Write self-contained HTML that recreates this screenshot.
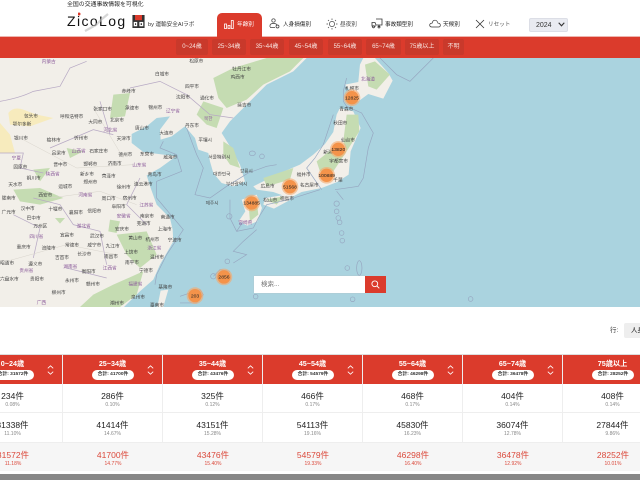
<!DOCTYPE html>
<html lang="ja"><head><meta charset="utf-8"><title>ZicoLog</title>
<style>
*{box-sizing:border-box;margin:0;padding:0}
html,body{width:640px;height:480px;overflow:hidden;background:#fff;font-family:"Liberation Sans","Noto Sans CJK JP",sans-serif}
.a{position:absolute;white-space:nowrap}
.nav{font-size:5.6px;line-height:8px;color:#222;top:21px}
.tag{position:absolute;top:39px;height:16px;background:#c9392b;color:#f8e2de;border-radius:2px;font-size:6px;line-height:16px;text-align:center}
.col{position:absolute;top:355px;width:100px;height:116px;text-align:center}
.h{height:29px;background:#db3b2c;border-right:1px solid #eee;color:#fff;position:relative}
.h b{position:absolute;left:0;right:0;top:4px;font-size:7.2px;line-height:9px}
.h i{position:absolute;left:29px;top:15px;width:42px;height:10px;border-radius:5px;background:#fff;color:#333;font-style:normal;font-size:4.8px;line-height:10px;font-weight:bold}
.h svg{position:absolute;left:84px;top:10px}
.r{height:29px;border-right:1px solid #eee;border-bottom:1px solid #eee;padding-top:7px;font-size:8.5px;line-height:11px;color:#222}
.r small{display:block;font-size:5px;line-height:6px;color:#888}
.r.t{background:#f6f6f6;color:#db4a3c;border:0;height:29px}
.r.t small{color:#db4a3c}
.r.m{height:30px}
</style></head><body>
<div class="a" style="left:67px;top:1px;font-size:5.9px;line-height:8px;color:#222">全国の交通事故情報を可視化</div>
<div class="a" style="left:67px;top:12px;font-size:14px;line-height:18px;letter-spacing:1.4px;color:#111;font-family:'Liberation Sans',sans-serif">ZicoLog</div>
<svg class="a" style="left:78px;top:9px" width="35" height="26" viewBox="0 0 35 26"><circle cx="1" cy="5" r="1.5" fill="#db3b2c"/><path d="M7 22L18 16L24 10L30 5" stroke="#bbb" stroke-width="2.2" fill="none" opacity=".6"/></svg>
<svg class="a" style="left:132px;top:15px" width="13" height="13" viewBox="0 0 14 15"><rect width="14" height="15" fill="#333"/><rect y="0" x="3" width="8" height="6" fill="#db3b2c"/><rect x="1.5" y="8" width="4" height="5" fill="#fff"/><rect x="8" y="8" width="4.5" height="5" fill="#fff"/><rect x="3" y="9.5" width="1.2" height="2" fill="#333"/><rect x="9.5" y="9.5" width="1.5" height="2" fill="#333"/></svg>
<div class="a" style="left:148px;top:21px;font-size:5.6px;line-height:8px;color:#333">by 運輸安全AIラボ</div>

<div class="a" style="left:217px;top:13px;width:45px;height:25px;background:#db3b2c;border-radius:5px 5px 0 0"></div>
<svg class="a" style="left:224px;top:20px" width="10" height="9" viewBox="0 0 10 9" fill="none" stroke="#fff" stroke-width=".8"><rect x=".5" y="4" width="2" height="4.5"/><rect x="4" y="5.5" width="2" height="3"/><rect x="7.3" y=".5" width="2" height="8"/></svg>
<div class="a nav" style="left:237px;color:#fff">年齢別</div>
<svg class="a" style="left:269px;top:18px" width="11" height="11" viewBox="0 0 11 11" fill="none" stroke="#333" stroke-width=".7"><circle cx="4.5" cy="2.5" r="1.7"/><path d="M1 9V7.5Q1 5.5 4.5 5.5T8 7.5"/><circle cx="8.5" cy="8.5" r="1.5"/><path d="M1 9.5H6"/></svg>
<div class="a nav" style="left:283px">人身損傷別</div>
<svg class="a" style="left:326px;top:18px" width="12" height="12" viewBox="0 0 12 12" fill="none" stroke="#444" stroke-width=".7"><circle cx="6" cy="6" r="2.6"/><path d="M6 .5V2M6 10V11.5M.5 6H2M10 6H11.5M2 2L3 3M9 9L10 10M10 2L9 3M3 9L2 10"/></svg>
<div class="a nav" style="left:340px;color:#444">昼夜別</div>
<svg class="a" style="left:371px;top:18px" width="12" height="11" viewBox="0 0 12 11" fill="none" stroke="#333" stroke-width=".8"><path d="M5 1H11V7H5L4 4.5H1V8H5M8 7V9"/><circle cx="2.5" cy="8.8" r="1"/><circle cx="8" cy="9" r="1"/></svg>
<div class="a nav" style="left:385px">事故類型別</div>
<svg class="a" style="left:429px;top:19px" width="12" height="9" viewBox="0 0 12 9" fill="none" stroke="#333" stroke-width=".7"><path d="M3 8H9.5Q11.5 8 11.3 6T9 4.2Q8 1 5.8 1.2T3.3 4Q.6 4.4.7 6.2T3 8Z"/></svg>
<div class="a nav" style="left:443px">天候別</div>
<svg class="a" style="left:475px;top:19px" width="10" height="10" viewBox="0 0 10 10" stroke="#333" stroke-width=".8"><path d="M1 1L9 9M9 1L1 9"/></svg>
<div class="a nav" style="left:488px;color:#555">リセット</div>
<div class="a" style="left:529px;top:18px;width:39px;height:14px;background:#e9ebf1;border:1px solid #dcdee6;border-radius:2px;font-size:7px;line-height:13px;color:#333;padding-left:6px">2024</div>
<svg class="a" style="left:558px;top:22px" width="7" height="5" viewBox="0 0 7 5" fill="none" stroke="#333" stroke-width="1.1"><path d="M.7.8L3.5 3.8L6.3.8"/></svg>

<div class="a" style="left:0;top:36px;width:640px;height:1px;background:#eeb5ae"></div>
<div class="a" style="left:0;top:37px;width:640px;height:21px;background:#db3b2c"></div>
<div class="a" style="left:217px;top:36px;width:45px;height:2px;background:#db3b2c"></div>
<div class="tag" style="left:176px;width:32px">0~24歳</div>
<div class="tag" style="left:212px;width:34px">25~34歳</div>
<div class="tag" style="left:250px;width:34px">35~44歳</div>
<div class="tag" style="left:289px;width:34px">45~54歳</div>
<div class="tag" style="left:328px;width:34px">55~64歳</div>
<div class="tag" style="left:366px;width:35px">65~74歳</div>
<div class="tag" style="left:405px;width:34px">75歳以上</div>
<div class="tag" style="left:443px;width:21px">不明</div>

<svg class="a" style="left:0;top:58px" width="640" height="249" viewBox="0 0 640 249">
<rect width="640" height="249" fill="#aad3df"/>
<g transform="scale(.3333)">
<rect x="0" y="0" width="370" height="747" fill="#f2efe9"/>
<rect x="0" y="0" width="505" height="170" fill="#f2efe9"/>
<path fill="#f2efe9" d="M920 0L880 40L800 80L750 130L690 190L665 225L690 265L720 320L735 370L700 385L665 375L640 345L630 310L625 285L595 275L585 240L555 205L515 235L482 245L480 215L510 175L470 180L440 205L395 228L395 255L430 282L490 290L528 295L480 330L440 352L452 390L470 440L510 480L518 515L520 550L480 620L460 665L420 700L372 747L0 747L0 0Z"/>
<path fill="#f2efe9" d="M1020 150L1060 160L1082 210L1052 280L1046 350L1012 372L965 390L905 402L870 420L820 402L770 395L760 385L830 350L900 320L940 290L975 258L1000 222L1010 170Z"/>
<path fill="#f2efe9" d="M1035 80L1075 72L1080 20L1090 0L1125 0L1165 45L1178 68L1150 122L1105 108L1075 130L1060 110Z"/>
<path fill="#f2efe9" d="M795 420L860 410L872 425L822 452L790 440Z"/>
<path fill="#f2efe9" d="M725 425L770 410L786 450L772 490L742 503L716 490L736 460Z"/>
<path fill="#f2efe9" d="M472 747L482 698L505 695L490 747Z"/>
<g fill="#c5dcb2">
<path d="M640 60L700 30L800 0L910 0L870 40L790 80L740 125L680 150L655 120Z"/>
<path d="M670 250L700 270L720 330L690 320L670 290Z"/>
<path d="M610 130L670 150L650 210L620 200L590 170Z"/>
<path d="M340 110L390 105L375 175L330 180Z"/>
<path d="M40 395L120 390L190 420L120 440L60 430Z"/>
<path d="M350 530L440 520L470 590L420 630L380 590Z"/>
<path d="M340 680L430 640L410 710L360 747L240 747L280 710Z"/>
<path d="M1095 20L1125 10L1170 50L1130 95L1105 85Z"/>
<path d="M1040 170L1075 170L1078 220L1040 280L1030 250Z"/>
<path d="M950 310L1000 270L1040 280L1000 340L960 340Z"/>
<path d="M790 360L880 330L870 365L800 385Z"/>
<path d="M745 430L770 425L775 470L750 490Z"/>
<path d="M800 425L850 415L830 440Z"/>
<path d="M330 485L360 490L350 525L325 520Z"/>
<path d="M100 335L150 330L120 370Z"/>
<path d="M200 270L250 280L210 300Z"/>
<path d="M165 480L195 480L180 497Z"/>
</g>
<path fill="#f7ebbd" d="M25 165Q40 145 70 155L110 170L160 180L90 205L30 200ZM0 195L30 230L45 285L0 285Z"/>
<g fill="none" stroke="#b7a9c4" stroke-width="2.2">
<path d="M0 130Q60 120 100 100L180 85L210 30L260 10"/>
<path d="M0 285H70L60 330L130 345M150 270L280 215L340 230M300 130L330 230M390 90L480 70L560 110L630 170L700 180"/>
<path d="M100 420L180 440L220 500L300 520L320 620M200 630L320 660M40 470L120 510L100 600M420 360L380 440L440 500"/>
</g>
<path fill="none" stroke="#d8d4cc" stroke-width="1.5" d="M60 240L230 330L400 320M150 420L300 400L410 440M20 610L200 560L350 590M280 150L370 300"/>
<g fill="none" stroke="#96a6c0" stroke-width="2">
<path d="M490 250L480 270L530 290L545 340L470 370L470 420L550 515L500 590L470 650L465 680"/>
<path d="M560 210L575 250L590 290L610 330L585 410L630 420L680 385L745 345L800 325L830 320M690 425L690 480L710 520L760 510L775 480L800 440L865 425L960 395"/>
<path d="M710 520L730 490M770 515L730 550L700 580L740 590L700 615M640 655L660 635L690 640M540 715L600 695L610 710L590 735L540 735"/>
<path d="M1040 60L1030 100L1030 130L1040 145L1085 165L1120 225L1105 270L1090 360L1075 385L1005 395M1010 400L1030 425M1140 0L1190 50L1230 70L1250 50L1300 0"/>
<path d="M965 395L920 330L945 300L970 260L1000 170"/>
<ellipse cx="757" cy="286" rx="9" ry="7"/><circle cx="786" cy="295" r="7"/><circle cx="688" cy="475" r="8"/><circle cx="1010" cy="437" r="8"/><circle cx="1010" cy="460" r="7"/><circle cx="1015" cy="480" r="7"/><circle cx="1019" cy="493" r="7"/><circle cx="1025" cy="525" r="7"/><circle cx="1027" cy="548" r="7"/><circle cx="1042" cy="630" r="7"/><ellipse cx="1078" cy="630" rx="8" ry="22"/><circle cx="1058" cy="724" r="7"/><circle cx="1412" cy="723" r="7"/><circle cx="767" cy="716" r="7"/><circle cx="682" cy="610" r="7"/><circle cx="640" cy="655" r="8"/>
</g>
<g font-family="'Noto Sans CJK SC',sans-serif" font-size="14" fill="#444">
<text x="568" y="14">松原市</text><text x="465" y="52">白城市</text><text x="697" y="38">牡丹江市</text><text x="692" y="62">鸡西市</text><text x="555" y="90">四平市</text><text x="528" y="122">沈阳市</text><text x="600" y="124">通化市</text><text x="712" y="146">延吉市</text><text x="365" y="104">赤峰市</text><text x="445" y="153">锦州市</text><text x="375" y="154">承德市</text><text x="280" y="158">张家口市</text><text x="330" y="190">北京市</text><text x="72" y="178">包头市</text><text x="180" y="180">呼和浩特市</text><text x="265" y="197">大同市</text><text x="38" y="202">鄂尔多斯</text><text x="405" y="214">唐山市</text><text x="478" y="230">大连市</text><text x="555" y="207">丹东市</text><text x="350" y="246">天津市</text><text x="222" y="245">忻州市</text><text x="140" y="250">榆林市</text><text x="42" y="244">银川市</text><text x="595" y="250">平壤시</text><text x="155" y="290">吕梁市</text><text x="268" y="283">石家庄市</text><text x="355" y="294">德州市</text><text x="420" y="293">东营市</text><text x="490" y="302">威海市</text><text x="625" y="301">서울特別시</text><text x="720" y="344">강릉시</text><text x="160" y="324">晋中市</text><text x="250" y="322">邯郸市</text><text x="323" y="321">济南市</text><text x="40" y="332">固原市</text><text x="443" y="354">青岛市</text><text x="640" y="352">대한민국</text><text x="305" y="358">菏泽市</text><text x="240" y="352">新乡市</text><text x="250" y="376">郑州市</text><text x="80" y="364">铜川市</text><text x="25" y="384">天水市</text><text x="175" y="390">运城市</text><text x="350" y="392">徐州市</text><text x="402" y="382">连云港市</text><text x="678" y="383">부산광역시</text><text x="782" y="389">広島市</text><text x="890" y="354">福井市</text><text x="900" y="386">名古屋市</text><text x="115" y="415">西安市</text><text x="305" y="426">周口市</text><text x="368" y="424">宿州市</text><text x="790" y="430">松山市</text><text x="840" y="426">徳島市</text><text x="617" y="440">제주시</text><text x="5" y="425">陇南市</text><text x="335" y="450">阜阳市</text><text x="5" y="466">广元市</text><text x="62" y="456">汉中市</text><text x="145" y="458">十堰市</text><text x="207" y="468">襄阳市</text><text x="262" y="464">信阳市</text><text x="420" y="478">南京市</text><text x="482" y="482">南通市</text><text x="80" y="485">巴中市</text><text x="410" y="501">芜湖市</text><text x="100" y="508">万州区</text><text x="473" y="517">上海市</text><text x="345" y="517">安庆市</text><text x="180" y="535">宜昌市</text><text x="270" y="538">武汉市</text><text x="385" y="544">黄山市</text><text x="436" y="549">杭州市</text><text x="503" y="550">宁波市</text><text x="125" y="574">涪陵市</text><text x="50" y="572">重庆市</text><text x="195" y="566">常德市</text><text x="262" y="566">咸宁市</text><text x="317" y="569">九江市</text><text x="372" y="586">上饶市</text><text x="165" y="603">吉首市</text><text x="232" y="592">长沙市</text><text x="312" y="600">南昌市</text><text x="450" y="601">温州市</text><text x="85" y="622">遵义市</text><text x="375" y="618">南平市</text><text x="417" y="642">宁德市</text><text x="245" y="645">衡阳市</text><text x="0" y="620">昭通市</text><text x="195" y="672">永州市</text><text x="90" y="668">贵阳市</text><text x="0" y="668">六盘水市</text><text x="258" y="682">赣州市</text><text x="475" y="691">基隆市</text><text x="155" y="708">柳州市</text><text x="393" y="721">泉州市</text><text x="450" y="745">臺南市</text><text x="330" y="739">潮州市</text><text x="1035" y="96">札幌市</text><text x="1018" y="157">青森市</text><text x="1000" y="199">秋田市</text><text x="1023" y="251">仙台市</text><text x="970" y="287">新潟</text><text x="988" y="313">宇都宮市</text><text x="1000" y="370">千葉</text>
</g>
<g font-family="'Noto Sans CJK SC',sans-serif" font-size="14" fill="#8a5a9a">
<text x="125" y="15">内蒙古</text><text x="310" y="220">河北省</text><text x="498" y="163">辽宁省</text><text x="612" y="186">북한</text><text x="215" y="283">山西省</text><text x="397" y="326">山东省</text><text x="35" y="305">宁夏</text><text x="137" y="353">陕西省</text><text x="235" y="415">河南省</text><text x="418" y="446">江苏省</text><text x="350" y="478">安徽省</text><text x="230" y="508">湖北省</text><text x="88" y="540">四川省</text><text x="442" y="574">浙江省</text><text x="58" y="642">贵州省</text><text x="190" y="630">湖南省</text><text x="308" y="634">江西省</text><text x="385" y="682">福建省</text><text x="715" y="498">宮崎県</text><text x="1083" y="67">北海道</text><text x="110" y="738">广西</text>
</g>
<g font-family="'Liberation Sans',sans-serif" font-size="15" fill="#222" text-anchor="middle">
<g><circle cx="1056" cy="119" r="25" fill="#f7a86a" fill-opacity=".6"/><circle cx="1056" cy="119" r="20" fill="#f4934a"/><text x="1056" y="124">12825</text></g>
<g><circle cx="1015" cy="274" r="25" fill="#f7a86a" fill-opacity=".6"/><circle cx="1015" cy="274" r="20" fill="#f4934a"/><text x="1015" y="279">13820</text></g>
<g><circle cx="980" cy="352" r="25" fill="#f7a86a" fill-opacity=".6"/><circle cx="980" cy="352" r="20" fill="#f4934a"/><text x="980" y="357">100889</text></g>
<g><circle cx="870" cy="386" r="25" fill="#f7a86a" fill-opacity=".6"/><circle cx="870" cy="386" r="20" fill="#f4934a"/><text x="870" y="391">51568</text></g>
<g><circle cx="755" cy="435" r="25" fill="#f7a86a" fill-opacity=".6"/><circle cx="755" cy="435" r="20" fill="#f4934a"/><text x="755" y="440">134885</text></g>
<g><circle cx="672" cy="657" r="25" fill="#f7a86a" fill-opacity=".6"/><circle cx="672" cy="657" r="20" fill="#f4934a"/><text x="672" y="662">2856</text></g>
<g><circle cx="585" cy="713" r="25" fill="#f7a86a" fill-opacity=".6"/><circle cx="585" cy="713" r="20" fill="#f4934a"/><text x="585" y="718">203</text></g>
</g>
</g>
</svg>

<div class="a" style="left:254px;top:276px;width:111px;height:17px;background:#fff;font-size:6.5px;line-height:17px;color:#777;padding-left:7px;box-shadow:0 0 1px #bbb">検索...</div>
<div class="a" style="left:365px;top:276px;width:21px;height:17px;background:#db3b2c"></div>
<svg class="a" style="left:371px;top:280px" width="9" height="9" viewBox="0 0 9 9" fill="none" stroke="#fff" stroke-width=".9"><circle cx="3.8" cy="3.8" r="2.9"/><path d="M6 6L8.3 8.3"/></svg>

<div class="a" style="left:610px;top:326px;font-size:6.5px;line-height:9px;color:#333">行:</div>
<div class="a" style="left:624px;top:323px;width:30px;height:15px;background:#eeeeee;border-radius:2px;font-size:6.5px;line-height:15px;color:#222;padding-left:7px">人身</div>

<div class="a" style="left:0;top:354px;width:640px;height:1px;background:#ddd"></div>
<div class="col" style="left:-37px"><div class="h"><b>0~24歳</b><i>合計: 31572件</i><svg width="7" height="10" viewBox="0 0 7 10" fill="none" stroke="#fff" stroke-width=".8"><path d="M.8 3.3L3.5.8L6.2 3.3M.8 6.7L3.5 9.2L6.2 6.7"/></svg></div><div class="r">234件<small>0.08%</small></div><div class="r m">31338件<small>11.10%</small></div><div class="r t">31572件<small>11.18%</small></div></div>
<div class="col" style="left:63px"><div class="h"><b>25~34歳</b><i>合計: 41700件</i><svg width="7" height="10" viewBox="0 0 7 10" fill="none" stroke="#fff" stroke-width=".8"><path d="M.8 3.3L3.5.8L6.2 3.3M.8 6.7L3.5 9.2L6.2 6.7"/></svg></div><div class="r">286件<small>0.10%</small></div><div class="r m">41414件<small>14.67%</small></div><div class="r t">41700件<small>14.77%</small></div></div>
<div class="col" style="left:163px"><div class="h"><b>35~44歳</b><i>合計: 43476件</i><svg width="7" height="10" viewBox="0 0 7 10" fill="none" stroke="#fff" stroke-width=".8"><path d="M.8 3.3L3.5.8L6.2 3.3M.8 6.7L3.5 9.2L6.2 6.7"/></svg></div><div class="r">325件<small>0.12%</small></div><div class="r m">43151件<small>15.28%</small></div><div class="r t">43476件<small>15.40%</small></div></div>
<div class="col" style="left:263px"><div class="h"><b>45~54歳</b><i>合計: 54579件</i><svg width="7" height="10" viewBox="0 0 7 10" fill="none" stroke="#fff" stroke-width=".8"><path d="M.8 3.3L3.5.8L6.2 3.3M.8 6.7L3.5 9.2L6.2 6.7"/></svg></div><div class="r">466件<small>0.17%</small></div><div class="r m">54113件<small>19.16%</small></div><div class="r t">54579件<small>19.33%</small></div></div>
<div class="col" style="left:363px"><div class="h"><b>55~64歳</b><i>合計: 46298件</i><svg width="7" height="10" viewBox="0 0 7 10" fill="none" stroke="#fff" stroke-width=".8"><path d="M.8 3.3L3.5.8L6.2 3.3M.8 6.7L3.5 9.2L6.2 6.7"/></svg></div><div class="r">468件<small>0.17%</small></div><div class="r m">45830件<small>16.23%</small></div><div class="r t">46298件<small>16.40%</small></div></div>
<div class="col" style="left:463px"><div class="h"><b>65~74歳</b><i>合計: 36478件</i><svg width="7" height="10" viewBox="0 0 7 10" fill="none" stroke="#fff" stroke-width=".8"><path d="M.8 3.3L3.5.8L6.2 3.3M.8 6.7L3.5 9.2L6.2 6.7"/></svg></div><div class="r">404件<small>0.14%</small></div><div class="r m">36074件<small>12.78%</small></div><div class="r t">36478件<small>12.92%</small></div></div>
<div class="col" style="left:563px"><div class="h"><b>75歳以上</b><i>合計: 28252件</i></div><div class="r">408件<small>0.14%</small></div><div class="r m">27844件<small>9.86%</small></div><div class="r t">28252件<small>10.01%</small></div></div>
<div class="a" style="left:0;top:471px;width:640px;height:3px;background:#fff"></div>
<div class="a" style="left:0;top:474px;width:640px;height:6px;background:#888"></div>
</body></html>
